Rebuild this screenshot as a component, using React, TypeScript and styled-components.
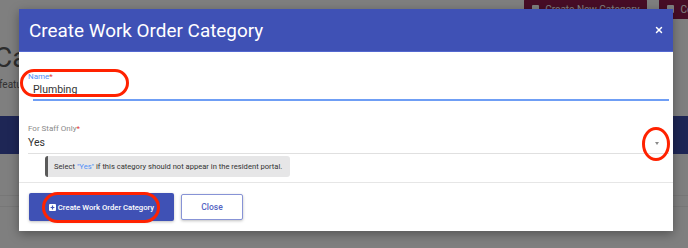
import React from "react";
import styled, { createGlobalStyle } from "styled-components";
import { X } from "lucide-react";

const GlobalStyle = createGlobalStyle`
  html, body {
    margin: 0;
    padding: 0;
    background: #ffffff;
    font-family: Roboto, "Liberation Sans", Arial, sans-serif;
  }
`;

const Stage = styled.div`
  position: relative;
  width: 688px;
  height: 248px;
  overflow: hidden;
  background: #ffffff;
`;

/* page behind the dialog */

const Page = styled.div`
  display: flex;
  flex-direction: column;
`;

const TopBar = styled.div`
  display: flex;
  justify-content: flex-end;
  gap: 12px;
  margin-top: -1px;
  margin-right: -40px;
`;

const PageButton = styled.div`
  display: flex;
  align-items: center;
  gap: 6px;
  height: 20px;
  padding: 0 8px;
  background: #8e1a4c;
  color: #ffffff;
  font-size: 10px;
  border-radius: 2px;
  white-space: nowrap;
`;

const PageIcon = styled.span`
  width: 7px;
  height: 8px;
  background: #ffffff;
  border-radius: 1px;
`;

const PageTitle = styled.h1`
  margin: 23px 0 0 -6px;
  font-size: 28px;
  font-weight: 400;
  line-height: 32px;
  color: #5a5a5a;
`;

const PageSub = styled.div`
  margin: 4px 0 0 -1px;
  font-size: 10px;
  line-height: 14px;
  color: #666666;
`;

const Band = styled.div`
  margin-top: 24px;
  height: 38px;
  background: #3c4cab;
`;

const Row = styled.div<{ $gap: number }>`
  height: 10px;
  border-bottom: 1px solid #eeeeee;
  margin-top: ${(p) => p.$gap}px;
`;

const Overlay = styled.div`
  position: absolute;
  inset: 0;
  background: rgba(0, 0, 0, 0.5);
`;

/* dialog */

const Modal = styled.div`
  position: absolute;
  left: 19px;
  top: 9px;
  width: 654px;
  background: #ffffff;
  box-shadow: 0 3px 10px rgba(0, 0, 0, 0.35);
  display: flex;
  flex-direction: column;
`;

const Header = styled.div`
  height: 42px;
  background: #3f51b5;
  display: flex;
  align-items: center;
  justify-content: space-between;
  padding: 0 9px 0 10px;
  border-bottom: 1px solid #5468d0;
`;

const Title = styled.h2`
  margin: 0;
  font-size: 18.9px;
  font-weight: 400;
  color: #ffffff;
`;

const CloseX = styled.button`
  display: flex;
  align-items: center;
  justify-content: center;
  padding: 0;
  border: none;
  background: none;
  color: #ffffff;
`;

const Body = styled.div`
  padding: 20px 4px 5px 9px;
  display: flex;
  flex-direction: column;
`;

const Label = styled.div<{ $active?: boolean }>`
  font-size: 8px;
  line-height: 10px;
  color: ${(p) => (p.$active ? "#4f8ef7" : "#8a8a8a")};
`;

const Req = styled.span`
  color: #e53935;
`;

const TextInput = styled.div`
  margin-left: 5px;
  padding: 1px 0 2px;
  font-size: 10.5px;
  line-height: 14px;
  color: #333333;
  border-bottom: 2px solid #6f9ef5;
`;

const SelectField = styled.div`
  margin-top: 23px;
  display: flex;
  flex-direction: column;
`;

const SelectBox = styled.div`
  display: flex;
  align-items: center;
  justify-content: space-between;
  padding: 2px 10px 3px 0;
  font-size: 10.5px;
  line-height: 14px;
  color: #333333;
  border-bottom: 1px solid #e0e0e0;
`;

const Caret = styled.span`
  width: 0;
  height: 0;
  border-left: 2.5px solid transparent;
  border-right: 2.5px solid transparent;
  border-top: 3px solid #8a8a8a;
`;

const Hint = styled.div`
  align-self: flex-start;
  margin: 2px 0 0 17px;
  height: 21px;
  display: flex;
  align-items: center;
  padding: 0 8px 0 6px;
  background: #e6e6e7;
  border-left: 3px solid #5a5a5a;
  border-radius: 3px;
  font-size: 7.6px;
  color: #333333;
`;

const Quote = styled.span`
  color: #4f8ef7;
  margin: 0 2px;
`;

const Footer = styled.div`
  border-top: 1px solid #e6e6e6;
  padding: 10px;
  display: flex;
  align-items: center;
  gap: 7px;
`;

const Button = styled.button<{ $primary?: boolean }>`
  display: flex;
  align-items: center;
  justify-content: center;
  gap: 2px;
  height: ${(p) => (p.$primary ? "28px" : "26px")};
  width: ${(p) => (p.$primary ? "145px" : "62px")};
  padding: 0;
  white-space: nowrap;
  font-family: Roboto, "Liberation Sans", Arial, sans-serif;
  font-size: ${(p) => (p.$primary ? "7.7px" : "8.5px")};
  font-weight: 500;
  border-radius: 2px;
  background: ${(p) => (p.$primary ? "#3f51b5" : "#ffffff")};
  color: ${(p) => (p.$primary ? "#ffffff" : "#5363c2")};
  border: ${(p) => (p.$primary ? "none" : "1px solid #8793d6")};
  box-shadow: 0 1px 3px rgba(0, 0, 0, 0.25);
`;

/* red annotation rings drawn over the screenshot */

const Ring = styled.div<{ $radius: string }>`
  position: absolute;
  box-sizing: border-box;
  border: 3px solid #ff2200;
  border-radius: ${(p) => p.$radius};
`;

const PlusIcon = () => (
  <svg width="7" height="7" viewBox="0 0 7 7">
    <rect width="7" height="7" rx="1" fill="#ffffff" />
    <path d="M3.5 1.6v3.8M1.6 3.5h3.8" stroke="#3f51b5" strokeWidth="1.2" />
  </svg>
);

export default function App() {
  return (
    <>
      <GlobalStyle />
      <Stage>
        <Page>
          <TopBar>
            <PageButton>
              <PageIcon />
              Create New Category
            </PageButton>
            <PageButton>
              <PageIcon />
              Columns
            </PageButton>
          </TopBar>
          <PageTitle>Categories</PageTitle>
          <PageSub>features</PageSub>
          <Band />
          <Row $gap={31} />
          <Row $gap={0} />
        </Page>
        <Overlay />
        <Modal>
          <Header>
            <Title>Create Work Order Category</Title>
            <CloseX>
              <X size={10} strokeWidth={3.5} />
            </CloseX>
          </Header>
          <Body>
            <Label $active>
              Name<Req>*</Req>
            </Label>
            <TextInput>Plumbing</TextInput>
            <SelectField>
              <Label>
                For Staff Only<Req>*</Req>
              </Label>
              <SelectBox>
                Yes
                <Caret />
              </SelectBox>
              <Hint>
                Select<Quote>"Yes"</Quote>if this category should not appear
                in the resident portal.
              </Hint>
            </SelectField>
          </Body>
          <Footer>
            <Button $primary>
              <PlusIcon />
              Create Work Order Category
            </Button>
            <Button>Close</Button>
          </Footer>
        </Modal>
        <Ring $radius="14px" style={{ left: 20, top: 69, width: 109, height: 28 }} />
        <Ring $radius="14px / 17px" style={{ left: 642, top: 127, width: 28, height: 34 }} />
        <Ring $radius="16px" style={{ left: 42, top: 192, width: 118, height: 31 }} />
      </Stage>
    </>
  );
}
